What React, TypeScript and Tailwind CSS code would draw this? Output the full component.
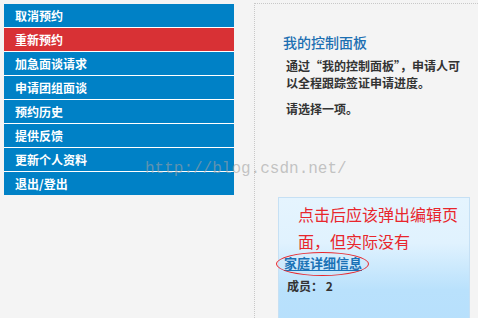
const menuItems = [
  '取消预约',
  '重新预约',
  '加急面谈请求',
  '申请团组面谈',
  '预约历史',
  '提供反馈',
  '更新个人资料',
  '退出/登出',
]

const activeIndex = 1

const cjk = "font-['Noto_Sans_CJK_SC','Liberation_Sans',sans-serif]"

function SideMenu() {
  return (
    <ul className="ml-1 mt-px flex w-[230px] flex-col gap-px bg-white">
      {menuItems.map((item, i) => (
        <li
          key={item}
          className={`flex h-[23px] items-center pl-[11px] text-[12px] font-bold leading-none text-white ${
            i === activeIndex ? 'bg-[#d83135]' : 'bg-[#0081c6]'
          }`}
        >
          {item}
        </li>
      ))}
    </ul>
  )
}

function FamilyBox() {
  return (
    <div className="ml-[23px] mt-[80px] h-[140px] w-[192px] border border-[#c6e0f4] bg-[linear-gradient(to_bottom,#e5f4fe_0px,#e0f2fe_45px,#b9e1fc_92px,#b6dffc_140px)]">
      <p className="mt-[3px] w-[184px] pl-[19px] pr-[5px] text-[16px] leading-[27px] text-[#e8262c]">
        点击后应该弹出编辑页面，但实际没有
      </p>
      <div className="flex pl-[5px] text-[13px] leading-[16px]">
        <a className="relative block font-bold text-[#1b72b6] underline underline-offset-2">
          家庭详细信息
          <span className="absolute -bottom-[5px] -left-2 -right-[7px] -top-[3px] rounded-[50%] border border-[#e8262c]" />
        </a>
      </div>
      <p className="mt-[6px] pl-2 text-[12px] font-bold leading-[18px] text-[#333]">成员： 2</p>
    </div>
  )
}

function ControlPanel() {
  return (
    <section className="ml-5 flex-1 self-stretch border-l border-t border-dotted border-[#c8c8c8]">
      <h2 className="mt-[28px] pl-[28px] text-[14px] font-medium leading-[20px] text-[#1c6fb2]">我的控制面板</h2>
      <p className="mt-[5px] w-[205px] pl-[31px] text-[12px] font-bold leading-[17px] text-[#333]">
        通过“我的控制面板”，申请人可以全程跟踪签证申请进度。
      </p>
      <p className="mt-[9px] pl-[31px] text-[12px] font-bold leading-[17px] text-[#333]">请选择一项。</p>
      <FamilyBox />
    </section>
  )
}

export default function App() {
  return (
    <div className={`relative flex h-[318px] w-[478px] items-start overflow-hidden bg-[#f4f4f4] pt-[3px] ${cjk}`}>
      <SideMenu />
      <ControlPanel />
      {/* blog watermark over the screenshot */}
      <span className="pointer-events-none absolute left-[145px] top-[161px] font-['Liberation_Mono',monospace] text-[16px] leading-[16px] text-[#a0a0a0]/60">
        http://blog.csdn.net/
      </span>
    </div>
  )
}
